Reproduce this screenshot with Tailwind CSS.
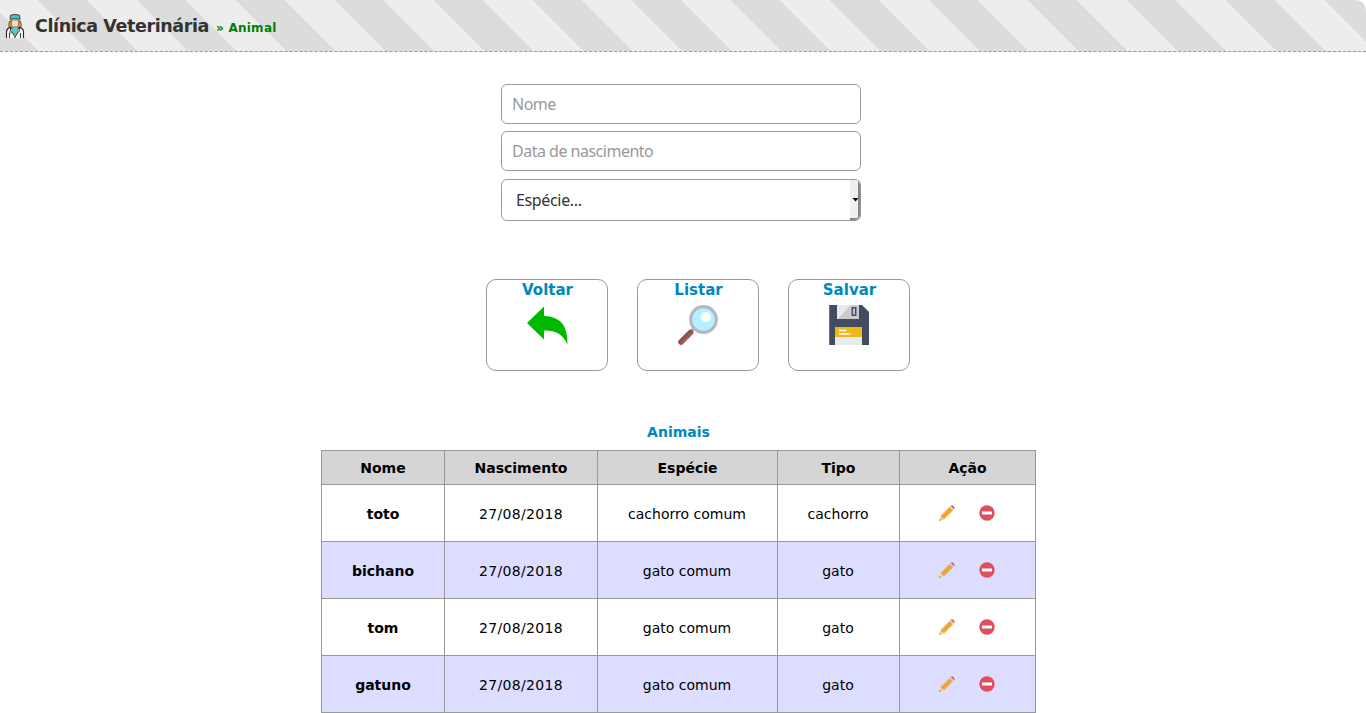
<!DOCTYPE html>
<html lang="pt-BR">
<head>
<meta charset="utf-8">
<title>Clínica Veterinária</title>
<script src="https://cdn.jsdelivr.net/npm/@tailwindcss/browser@4"></script>
</head>
<body class="h-[713px] overflow-hidden bg-white font-['DejaVu_Sans',Verdana,sans-serif] text-black">
<svg class="hidden">
  <symbol id="pencil" viewBox="0 0 16 16">
    <path d="M0.3 15.7L1.5 10.8L5 14.4Z" fill="#efd4a8"/>
    <path d="M0.3 15.7L0.8 14L2 15.2Z" fill="#6b6259"/>
    <path d="M1.5 10.9L10.5 1.9L14 5.4L5 14.4Z" fill="#f3ad3d"/>
    <path d="M3.2 12.6L12.2 3.6" stroke="#e09a35" stroke-width="1.1"/>
    <path d="M10.5 1.9L11.7 0.7L15.2 4.2L14 5.4Z" fill="#cfd0d2"/>
    <path d="M11.7 0.7Q13-.2 14.6 1.2Q16.1 2.9 15.2 4.2Z" fill="#dc5360"/>
  </symbol>
  <symbol id="remove" viewBox="0 0 16 16">
    <circle cx="8" cy="8" r="7.7" fill="#e04f5f"/>
    <rect x="3" y="6.4" width="10" height="3.2" rx=".4" fill="#fff"/>
  </symbol>
</svg>

<header class="flex h-[52px] items-center rounded-tr-[10px] border-b border-dashed border-[#999] bg-[repeating-linear-gradient(45deg,#dcdcdc_0,#dcdcdc_27.5px,#ededed_27.5px,#ededed_62.5px,#dcdcdc_62.5px,#dcdcdc_70px)] pl-[3px]">
  <svg class="mt-px size-6" viewBox="0 0 24 24">
    <path d="M6.7 7Q5 10.5 6 13Q8 15 10.5 14V7ZM17.3 7Q19 10.5 18 13Q16 15 13.5 14V7Z" fill="#d39a35" stroke="#4b3a21" stroke-width=".7"/>
    <path d="M8.4 6h7.2v5.2Q14 14.5 12 14.5T8.4 11.2Z" fill="#f7dcc0" stroke="#4b3a21" stroke-width=".6"/>
    <path d="M7.4 1.3Q12-.6 16.6 1.3L17 5.3Q12 3.9 7 5.3Z" fill="#4fbfc2" stroke="#1d3b42" stroke-width=".9"/>
    <path d="M3.5 24V18Q3.5 14.4 7.5 13.4L12 16L16.5 13.4Q20.5 14.4 20.5 18V24" fill="#fafafa" stroke="#20242b" stroke-width="1.1"/>
    <path d="M8.5 13.6L12 12.7L15.5 13.6L14.6 18L12 21L9.4 18Z" fill="#5ccbcc" stroke="#27636b" stroke-width=".5"/>
    <path d="M7.6 13.7V17L9.5 19L12 23M16.4 13.7V17L14.5 19L12 23V24M6.5 24V19M17.5 24V19" fill="none" stroke="#20242b" stroke-width=".9"/>
    <circle cx="7.6" cy="18" r="1" fill="#fff" stroke="#20242b" stroke-width=".6"/>
  </svg>
  <h1 class="ml-2 text-[17.5px] leading-6 font-bold tracking-[-0.4px] text-[#333]">Clínica Veterinária</h1>
  <span class="mt-[5px] ml-[7px] text-xs font-bold tracking-[0.25px] text-[#008000]">» Animal</span>
</header>

<main>
  <form class="mt-8 ml-[501px] flex w-[360px] flex-col font-['Noto_Sans',sans-serif] text-base tracking-[-0.5px]">
    <div class="flex h-10 items-center rounded-md border border-[#999] pb-px pl-2.5 text-[#999]">Nome</div>
    <div class="mt-[7px] flex h-10 items-center rounded-md border border-[#999] pb-px pl-2.5 text-[#999]">Data de nascimento</div>
    <div class="mt-2 flex h-[42px] items-center justify-between overflow-hidden rounded-md border border-[#999] pl-3.5 tracking-[-0.35px] text-[#333]">
      <span class="pb-px">Espécie...</span>
      <span class="flex h-full w-[10px] items-center border-r-2 border-b-2 border-[#858585] bg-[#f0f0ee]">
        <svg class="mt-0.5 ml-[3px] h-1 w-[5px] shrink-0 overflow-visible" viewBox="0 0 5 4"><path d="M-.5 0H5.5L2.5 3.6Z" fill="#000"/></svg>
      </span>
    </div>
  </form>

  <nav class="mt-[58px] ml-[486px] flex gap-[29px] text-[15px] leading-5 font-bold text-[#0088bb]">
    <a class="flex h-[92px] w-[122px] flex-col items-center rounded-[10px] border border-[#999]">
      <span class="pl-px">Voltar</span>
      <svg class="mt-[5px] size-[41px]" viewBox="0 0 41 41"><path d="M0 18L17 1.5V11Q30 11 36 19.5Q40.5 26 40.5 39.5Q34 24.5 17 25.5V34.5Z" fill="#00b800"/></svg>
    </a>
    <a class="flex h-[92px] w-[122px] flex-col items-center rounded-[10px] border border-[#999]">
      <span class="pl-px">Listar</span>
      <svg class="mt-[5px] size-10" viewBox="0 0 40 40">
        <path d="M13 26.5L17 22.5" stroke="#a3a2ab" stroke-width="2.5"/>
        <path d="M3 37L12.5 27.5" stroke="#8a5350" stroke-width="5.6" stroke-linecap="round"/>
        <path d="M3.5 38L14 28" stroke="#a45d55" stroke-width="2"/>
        <circle cx="25.5" cy="14.5" r="12.8" fill="#b0f3ff" stroke="#b6b6bf" stroke-width="3.2"/>
        <circle cx="28" cy="12" r="5" fill="#fff"/>
      </svg>
    </a>
    <a class="flex h-[92px] w-[122px] flex-col items-center rounded-[10px] border border-[#999]">
      <span class="pl-px">Salvar</span>
      <svg class="mt-[5px] size-10" viewBox="0 0 40 40">
        <path d="M0 0H33L40 7V40H0Z" fill="#434c60"/>
        <path d="M0 0H1V40H0Z" fill="#6b7488"/>
        <path d="M8 0H30V14H8Z" fill="#e6ebeb"/>
        <path d="M21.5 0H30V14H9Z" fill="#cbccca"/>
        <path d="M23.3 2.8H26.7V10.2H23.3Z" fill="#cbccca" stroke="#434c60" stroke-width="1.5"/>
        <path d="M6 22H33V32H6Z" fill="#efb817"/>
        <path d="M6 32H33V40H6Z" fill="#e6ebeb"/>
        <path d="M10 25.5H17.5M10 29H20M21 29H22" stroke="#fff" stroke-width="1.4"/>
      </svg>
    </a>
  </nav>

  <table class="mt-[51px] ml-[321px] w-[715px] table-fixed border-collapse text-center text-sm [&_td]:border [&_td]:border-[#999] [&_td]:p-0 [&_td]:pr-px [&_th]:border [&_th]:border-[#999] [&_th]:p-0 [&_tbody_th]:pt-0.5">
    <caption class="h-7 leading-5 font-bold text-[#0088bb]">Animais</caption>
    <colgroup><col class="w-[123px]"><col class="w-[153px]"><col class="w-[180px]"><col class="w-[122px]"><col class="w-[136px]"></colgroup>
    <thead>
      <tr class="h-[34px] bg-[#d5d5d5]"><th>Nome</th><th>Nascimento</th><th>Espécie</th><th>Tipo</th><th>Ação</th></tr>
    </thead>
    <tbody>
      <tr class="h-[57px]"><th>toto</th><td><div class="pt-0.5 pl-px tracking-[0.35px]">27/08/2018</div></td><td><div class="pt-0.5">cachorro comum</div></td><td><div class="pt-0.5">cachorro</div></td>
        <td><div class="flex justify-center gap-6"><svg class="size-4"><use href="#pencil"/></svg><svg class="size-4"><use href="#remove"/></svg></div></td></tr>
      <tr class="h-[57px] bg-[#ddddff]"><th>bichano</th><td><div class="pt-0.5 pl-px tracking-[0.35px]">27/08/2018</div></td><td><div class="pt-0.5">gato comum</div></td><td><div class="pt-0.5">gato</div></td>
        <td><div class="flex justify-center gap-6"><svg class="size-4"><use href="#pencil"/></svg><svg class="size-4"><use href="#remove"/></svg></div></td></tr>
      <tr class="h-[57px]"><th>tom</th><td><div class="pt-0.5 pl-px tracking-[0.35px]">27/08/2018</div></td><td><div class="pt-0.5">gato comum</div></td><td><div class="pt-0.5">gato</div></td>
        <td><div class="flex justify-center gap-6"><svg class="size-4"><use href="#pencil"/></svg><svg class="size-4"><use href="#remove"/></svg></div></td></tr>
      <tr class="h-[57px] bg-[#ddddff]"><th>gatuno</th><td><div class="pt-0.5 pl-px tracking-[0.35px]">27/08/2018</div></td><td><div class="pt-0.5">gato comum</div></td><td><div class="pt-0.5">gato</div></td>
        <td><div class="flex justify-center gap-6"><svg class="size-4"><use href="#pencil"/></svg><svg class="size-4"><use href="#remove"/></svg></div></td></tr>
    </tbody>
  </table>
</main>
</body>
</html>
